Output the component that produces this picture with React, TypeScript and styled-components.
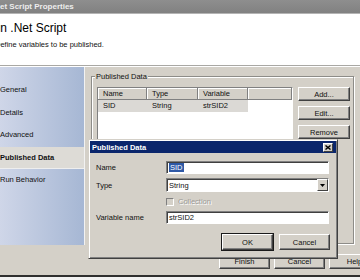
import React from "react";
import styled, {createGlobalStyle} from "styled-components";

const GlobalStyle = createGlobalStyle`
  html, body {
    margin: 0;
    padding: 0;
    background: #d4d0c8;
  }
  body {
    font-family: "Liberation Sans", Arial, sans-serif;
    font-size: 7.5px;
    color: #111;
    overflow: hidden;
  }
`;

const Window = styled.div`
  position: relative;
  width: 360px;
  height: 280px;
  overflow: hidden;
  display: flex;
  flex-direction: column;
  background: #d4d0c8;
`;

const TitleBar = styled.div`
  flex: none;
  height: 13px;
  border-bottom: 1px solid #b4b4b4;
  background: linear-gradient(#8e8e8e, #818181);
  color: #ededed;
  font-size: 8px;
  font-weight: bold;
  line-height: 13px;
  white-space: nowrap;

  & > span {
    display: inline-block;
    margin-left: -8px;
  }
`;

const Header = styled.header`
  flex: none;
  height: 51px;
  background: #fff;
  border-bottom: 1px solid #a9a8a4;
  white-space: nowrap;
`;

const HeaderTitle = styled.h1`
  margin: 7px 0 0 -15px;
  font-size: 12px;
  font-weight: normal;
  line-height: 14px;
  color: #000;
`;

const HeaderText = styled.p`
  margin: 5px 0 0 -5px;
  font-size: 7.5px;
  line-height: 9px;
`;

const Body = styled.div`
  flex: none;
  height: 178px;
  display: flex;
  border-top: 1px solid #fff;
`;

const Nav = styled.nav`
  flex: none;
  width: 84px;
  padding-top: 12px;
  background: linear-gradient(to right, #cfd6e8, #a6b7d4);
  border-right: 1px solid #f2f2f2;
`;

const NavItem = styled.div<{$active?: boolean}>`
  height: 22.5px;
  display: flex;
  align-items: center;
  white-space: nowrap;
  font-weight: ${(p) => (p.$active ? "bold" : "normal")};
  background: ${(p) => (p.$active ? "#dddbd6" : "transparent")};
  border-bottom: 1px solid ${(p) => (p.$active ? "#eeeeee" : "transparent")};
  box-sizing: border-box;
`;

const Content = styled.div`
  flex: 1;
  display: flex;
  flex-direction: column;
  padding: 5px 6px 1px 6px;
`;

const Group = styled.fieldset`
  flex: 1;
  min-height: 0;
  margin: 0;
  padding: 6px 2px 0 5px;
  border: 1px solid #8d8c88;
  box-shadow: inset 1px 1px 0 #fff, 1px 1px 0 #fff;
`;

const GroupLabel = styled.legend`
  margin-left: -2px;
  padding: 0 1px;
  line-height: 9px;
  background: #d4d0c8;
`;

const GroupInner = styled.div`
  display: flex;
  gap: 5px;
  align-items: flex-start;
`;

const ListView = styled.div`
  width: 196px;
  height: 142px;
  box-sizing: border-box;
  border: 1px solid;
  border-color: #808080 #fff #fff #808080;
  background: #fff;
`;

const ListLine = styled.div`
  display: flex;
  height: 12px;
`;

const HeaderCell = styled.div<{$w?: number}>`
  flex: ${(p) => (p.$w ? "none" : "1")};
  width: ${(p) => (p.$w ? `${p.$w}px` : "auto")};
  box-sizing: border-box;
  padding-left: 5px;
  background: #d4d0c8;
  border-right: 1px solid #808080;
  border-bottom: 1px solid #808080;
  box-shadow: inset 1px 1px 0 #fff;
  line-height: 11px;
`;

const RowCell = styled.div<{$w: number}>`
  width: ${(p) => p.$w}px;
  box-sizing: border-box;
  padding-left: 5px;
  background: #dbd9d5;
  line-height: 12px;
`;

const ButtonColumn = styled.div`
  display: flex;
  flex-direction: column;
  gap: 5px;
`;

const Button = styled.button<{$w?: number; $h?: number; $default?: boolean}>`
  width: ${(p) => p.$w ?? 52}px;
  height: ${(p) => p.$h ?? 14}px;
  box-sizing: border-box;
  padding: 0;
  margin: 0;
  font-family: inherit;
  font-size: 7.5px;
  color: #111;
  background: #d4d0c8;
  border: 1px solid;
  border-color: #fff #404040 #404040 #fff;
  box-shadow: inset -1px -1px 0 #808080;
  outline: ${(p) => (p.$default ? "1px solid #1a1a1a" : "none")};
  outline-offset: 0;
`;

const Footer = styled.div`
  flex: none;
  height: 30px;
  box-sizing: border-box;
  padding-top: 9px;
  margin-right: -20px;
  display: flex;
  justify-content: flex-end;
  gap: 4px;
`;

const StatusStrip = styled.div`
  flex: none;
  height: 1px;
  padding-top: 2px;
  border-top: 2px solid #2f2f2f;
  background: #f2f2f2;
  display: flex;
  gap: 32px;
  overflow: hidden;
  font-size: 8px;
  line-height: 8px;
  color: #000;
  white-space: nowrap;
`;

const Dialog = styled.div`
  position: absolute;
  left: 88px;
  top: 139px;
  width: 250px;
  height: 120px;
  box-sizing: border-box;
  padding: 1px;
  background: #d4d0c8;
  border: 1px solid;
  border-color: #d4d0c8 #404040 #404040 #d4d0c8;
  box-shadow: inset 1px 1px 0 #fff, inset -1px -1px 0 #808080;
`;

const DialogTitle = styled.div`
  height: 12px;
  display: flex;
  align-items: center;
  justify-content: space-between;
  padding: 0 3px 0 2px;
  background: #0b266c;
  color: #fff;
  font-weight: bold;
`;

const CloseButton = styled.div`
  width: 10px;
  height: 9px;
  box-sizing: border-box;
  display: flex;
  align-items: center;
  justify-content: center;
  background: #d4d0c8;
  border: 1px solid;
  border-color: #fff #404040 #404040 #fff;
`;

const DialogForm = styled.div`
  display: grid;
  grid-template-columns: 70px 163px;
  grid-template-rows: 13px 14px 11px 13px;
  row-gap: 4px;
  align-items: center;
  padding: 8px 0 0 6px;
`;

const FieldLabel = styled.label`
  white-space: nowrap;
`;

const TextBox = styled.div`
  height: 100%;
  box-sizing: border-box;
  padding-left: 2px;
  display: flex;
  align-items: center;
  background: #fff;
  border: 1px solid;
  border-color: #808080 #fff #fff #808080;
  box-shadow: inset 1px 1px 0 #404040;
`;

const Selected = styled.span`
  background: #2f59a6;
  color: #fff;
  padding: 0 1px;
  line-height: 9px;
`;

const DropButton = styled.div`
  margin-left: auto;
  width: 11px;
  height: 100%;
  box-sizing: border-box;
  display: flex;
  align-items: center;
  justify-content: center;
  background: #d4d0c8;
  border: 1px solid;
  border-color: #fff #404040 #404040 #fff;
`;

const CheckRow = styled.div`
  display: flex;
  align-items: center;
  gap: 4px;
`;

const CheckBox = styled.span`
  width: 8px;
  height: 8px;
  box-sizing: border-box;
  background: #d4d0c8;
  border: 1px solid;
  border-color: #808080 #fff #fff #808080;
`;

const DisabledText = styled.span`
  color: #9b9a96;
  text-shadow: 1px 1px 0 #fff;
`;

const DialogButtons = styled.div`
  display: flex;
  justify-content: flex-end;
  gap: 6px;
  padding: 10px 6px 0 0;
`;

const navItems = ["General", "Details", "Advanced", "Published Data", "Run Behavior"];

const App: React.FC = () => {
  return (
    <Window>
      <GlobalStyle />
      <TitleBar>
        <span>.Net Script Properties</span>
      </TitleBar>
      <Header>
        <HeaderTitle>Run .Net Script</HeaderTitle>
        <HeaderText>Define variables to be published.</HeaderText>
      </Header>
      <Body>
        <Nav>
          {navItems.map((item) => (
            <NavItem key={item} $active={item === "Published Data"}>
              {item}
            </NavItem>
          ))}
        </Nav>
        <Content>
          <Group>
            <GroupLabel>Published Data</GroupLabel>
            <GroupInner>
              <ListView>
                <ListLine>
                  <HeaderCell $w={49}>Name</HeaderCell>
                  <HeaderCell $w={51}>Type</HeaderCell>
                  <HeaderCell $w={50}>Variable</HeaderCell>
                  <HeaderCell />
                </ListLine>
                <ListLine>
                  <RowCell $w={49}>SID</RowCell>
                  <RowCell $w={51}>String</RowCell>
                  <RowCell $w={50}>strSID2</RowCell>
                </ListLine>
              </ListView>
              <ButtonColumn>
                <Button>Add...</Button>
                <Button>Edit...</Button>
                <Button>Remove</Button>
              </ButtonColumn>
            </GroupInner>
          </Group>
        </Content>
      </Body>
      <Footer>
        <Button $w={51} $h={15}>Finish</Button>
        <Button $w={51} $h={15}>Cancel</Button>
        <Button $w={51} $h={15}>Help</Button>
      </Footer>
      <StatusStrip>
        <span>153 ###</span>
        <span>201 1:3:3:3 1</span>
      </StatusStrip>

      <Dialog>
        <DialogTitle>
          <span>Published Data</span>
          <CloseButton>
            <svg width="6" height="5" viewBox="0 0 6 5">
              <path d="M0.5 0.5 L5.5 4.5 M5.5 0.5 L0.5 4.5" stroke="#000" strokeWidth="1.4" />
            </svg>
          </CloseButton>
        </DialogTitle>
        <DialogForm>
          <FieldLabel>Name</FieldLabel>
          <TextBox>
            <Selected>SID</Selected>
          </TextBox>
          <FieldLabel>Type</FieldLabel>
          <TextBox>
            String
            <DropButton>
              <svg width="5" height="3" viewBox="0 0 5 3">
                <path d="M0 0 H5 L2.5 3 Z" fill="#000" />
              </svg>
            </DropButton>
          </TextBox>
          <span />
          <CheckRow>
            <CheckBox />
            <DisabledText>Collection</DisabledText>
          </CheckRow>
          <FieldLabel>Variable name</FieldLabel>
          <TextBox>strSID2</TextBox>
        </DialogForm>
        <DialogButtons>
          <Button $w={51} $h={16} $default>OK</Button>
          <Button $w={51} $h={16}>Cancel</Button>
        </DialogButtons>
      </Dialog>
    </Window>
  );
};

export default App;
